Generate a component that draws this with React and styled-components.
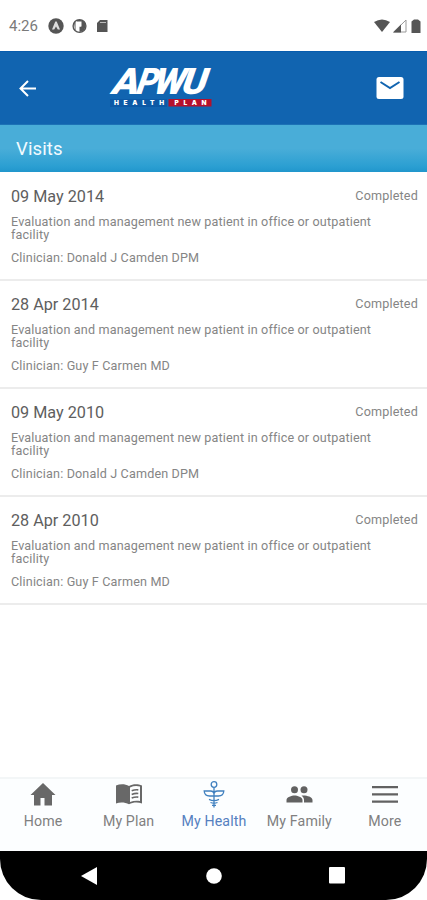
import React from "react";
import styled, { createGlobalStyle } from "styled-components";

const GlobalStyle = createGlobalStyle`
  * { box-sizing: border-box; }
  body { margin: 0; background: #fff; font-family: Roboto, "Liberation Sans", sans-serif; }
`;

const Screen = styled.div`
  width: 427px;
  height: 900px;
  display: flex;
  flex-direction: column;
  background: #fff;
  overflow: hidden;
`;

const StatusBar = styled.header`
  height: 51px;
  flex: none;
  display: flex;
  align-items: center;
  justify-content: space-between;
  padding: 1px 5px 0 9px;
`;

const StatusGroup = styled.div`
  display: flex;
  align-items: center;
  gap: ${(p) => p.$gap}px;
`;

const Clock = styled.span`
  width: 31px;
  font: 400 15px/18px Roboto, sans-serif;
  color: #7a7a7a;
`;

const AppBar = styled.div`
  height: 74px;
  flex: none;
  display: flex;
  align-items: center;
  padding: 0 23px 0 19px;
  background: #1164b0;
  border-top: 1px solid #075cae;
  border-bottom: 1px solid #1c72b6;
`;

const BackButton = styled.button`
  display: flex;
  padding: 0;
  border: 0;
  background: none;
`;

const LogoMark = styled.svg`
  margin: 0 auto 0 72px;
  display: block;
  overflow: visible;
`;

const TitleBar = styled.h1`
  height: 47px;
  flex: none;
  margin: 0;
  padding: 1px 16px 0;
  font-size: 18.5px;
  font-weight: 400;
  line-height: 46px;
  letter-spacing: 0.1px;
  color: #f2fbff;
  background: linear-gradient(#49add8 0, #49add8 50%, #2b9fd2 88%, #2196cc 100%);
`;

const VisitList = styled.main`
  flex: 1;
  padding-top: 1px;
`;

const VisitRow = styled.article`
  height: 108px;
  padding: 14px 9px 0 11px;
  border-bottom: 2px solid #ececec;
`;

const VisitHead = styled.div`
  display: flex;
  justify-content: space-between;
  height: 28px;
`;

const VisitDate = styled.h2`
  margin: 0;
  font-size: 16.2px;
  font-weight: 400;
  line-height: 20px;
  color: #5e5e5e;
`;

const VisitStatus = styled.span`
  font-size: 12.6px;
  line-height: 17px;
  letter-spacing: 0.17px;
  color: #858585;
`;

const VisitText = styled.p`
  margin: 0 0 ${(p) => p.$after || 0}px;
  width: 375px;
  font-size: 12.6px;
  line-height: 13px;
  letter-spacing: 0.15px;
  color: #858585;
`;

const TabBar = styled.nav`
  height: 74px;
  flex: none;
  display: grid;
  grid-template-columns: repeat(5, 1fr);
  background: #fcfeff;
  border-top: 2px solid #f3f6f7;
`;

const Tab = styled.a`
  display: flex;
  flex-direction: column;
  align-items: center;
  gap: 2px;
  padding: 1px 0 0 1px;
  font-size: 14.2px;
  line-height: 18px;
  letter-spacing: 0.12px;
  white-space: nowrap;
  color: ${(p) => (p.$active ? "#5580c0" : "#808080")};
`;

const SystemNav = styled.footer`
  height: 49px;
  flex: none;
  display: flex;
  align-items: center;
  justify-content: space-between;
  padding: 0 82px 0 81px;
  background: #000;
  border-radius: 0 0 41px 41px;
`;

const visits = [
  { date: "09 May 2014", clinician: "Donald J Camden DPM" },
  { date: "28 Apr 2014", clinician: "Guy F Carmen MD" },
  { date: "09 May 2010", clinician: "Donald J Camden DPM" },
  { date: "28 Apr 2010", clinician: "Guy F Carmen MD" },
];

const HomeIcon = () => (
  <svg width="28" height="30" viewBox="0 0 28 30" fill="#686868">
    <path d="M14 3 1.500 15H5v10.500h6.500V18h4v7.500H23V15h3.500z" />
  </svg>
);

const BookIcon = () => (
  <svg width="28" height="30" viewBox="0 0 28 30">
    <path d="M14 6C10 3.600 5 3.700 1 5.500V23.500c4-1.600 9-1.400 13 .8 4-2.200 9-2.400 13-.8V5.500C23 3.700 18 3.600 14 6z" fill="#686868" />
    <path d="M15 7.500c3.500-1.600 6.800-1.900 10-.9v14.500c-3.300-.8-6.700-.5-10 1z" fill="#fcfeff" />
    <path d="M16.700 10.800q3.200-1.300 6.600-.9M16.700 14.400q3.200-1.300 6.600-.9M16.700 18q3.200-1.300 6.600-.9" fill="none" stroke="#686868" strokeWidth="1.600" />
  </svg>
);

const HealthIcon = () => (
  <svg width="28" height="30" viewBox="0 0 28 30" fill="none" stroke="#4080bf" strokeWidth="1.300">
    <circle cx="14" cy="4.500" r="2.800" />
    <path d="M14 7.500v20M14 14.500q0-3.500-3.500-3.500H4.200q.3 5 5.300 5h9q5 0 5.300-5h-6.300q-3.500 0-3.500 3.500M9 19.300q5 2.500 10 0M10.500 22.500q3.500 1.500 7 0M12 25.300h4" />
  </svg>
);

const FamilyIcon = () => (
  <svg width="28" height="30" viewBox="0 0 28 30" fill="#626262">
    <circle cx="9.500" cy="9.800" r="3.500" />
    <circle cx="19" cy="9.800" r="3.500" />
    <path d="M1.500 22.500V20c0-3 5.300-4.500 8-4.500s8 1.500 8 4.500v2.500zM19 22.500V20c0-2-1-3.300-2.500-4.300 3-.8 11 .6 11 4.300v2.500z" />
  </svg>
);

const MoreIcon = () => (
  <svg width="28" height="30" viewBox="0 0 28 30" fill="#626262">
    <path d="M1 6h26v2.300H1zm0 7.200h26v2.300H1zm0 7.300h26v2.300H1z" />
  </svg>
);

const tabs = [
  { label: "Home", icon: <HomeIcon /> },
  { label: "My Plan", icon: <BookIcon /> },
  { label: "My Health", icon: <HealthIcon />, active: true },
  { label: "My Family", icon: <FamilyIcon /> },
  { label: "More", icon: <MoreIcon /> },
];

const Logo = () => (
  <LogoMark width="104" height="42" viewBox="0 0 104 42">
    <g transform="translate(0 27) skewX(-19)">
      <g fontFamily="Roboto, sans-serif" fontWeight="900" fontSize="36.500" fill="#fff">
        <text x="0.500" y="0" textLength="27" lengthAdjust="spacingAndGlyphs">A</text>
        <text x="25" y="0" textLength="21" lengthAdjust="spacingAndGlyphs">P</text>
        <text x="42" y="0" textLength="31" lengthAdjust="spacingAndGlyphs">W</text>
        <text x="70" y="0" textLength="25" lengthAdjust="spacingAndGlyphs">U</text>
      </g>
    </g>
    <rect x="1" y="32" width="57" height="8" fill="#0c59a6" />
    <rect x="59.500" y="32" width="43" height="7.500" fill="#b4102c" />
    <g fontFamily="Inter, sans-serif" fontWeight="900" fontSize="6.500" fill="#fff">
      <text x="5" y="38.200" textLength="50">HEALTH</text>
      <text x="65.500" y="38.200" textLength="32">PLAN</text>
    </g>
  </LogoMark>
);

export default function App() {
  return (
    <>
      <GlobalStyle />
      <Screen>
        <StatusBar>
          <StatusGroup $gap={8}>
            <Clock>4:26</Clock>
            <svg width="16" height="16" viewBox="0 0 16 16">
              <circle cx="8" cy="8" r="7.700" fill="#555" />
              <path d="m4 11.500 3.300-8h1.400l3.300 8H9.800L8 8.500l-1.800 3z" fill="#ddd" />
            </svg>
            <svg width="15" height="16" viewBox="0 0 15 16">
              <circle cx="7.500" cy="8" r="6.400" fill="#fff" stroke="#555" strokeWidth="1.400" />
              <path d="M5 3.500h4.500v5H7.500v5.500a6 6 0 0 0 6-6A6 6 0 0 0 9 2H5zM2 4h1.500v8H3z" fill="#555" />
              <path d="M5 4.500h4v4H7v4.500H5z" fill="#fff" />
            </svg>
            <svg width="15" height="16" viewBox="0 0 15 16">
              <path d="M5 2h7.500v12H2V5z" fill="#555" />
              <path d="M5 4.500h6" stroke="#bbb" />
            </svg>
          </StatusGroup>
          <StatusGroup $gap={3}>
            <svg width="16" height="14" viewBox="0 0 16 14">
              <path d="M0 3q8-5 16 0L8 13z" fill="#555" />
            </svg>
            <svg width="14" height="14" viewBox="0 0 14 14">
              <path d="M.8 13 13 1v12z" fill="#fff" stroke="#999" />
              <path d="M0 13.500 8 5.500v8z" fill="#555" />
            </svg>
            <svg width="12" height="14" viewBox="0 0 12 14">
              <path d="M1.500 2.500 4 .5h4l2.500 2V14h-9z" fill="#555" />
            </svg>
          </StatusGroup>
        </StatusBar>
        <AppBar>
          <BackButton aria-label="Back">
            <svg width="18" height="18" viewBox="0 0 18 18" fill="none" stroke="#fff" strokeWidth="2">
              <path d="M17 9.500H2M9 2 1.500 9.500 9 17" />
            </svg>
          </BackButton>
          <Logo />
          <svg width="28" height="22" viewBox="0 0 28 22">
            <rect x="0.500" y="0" width="27" height="22" rx="2.500" fill="#fff" />
            <path d="m4.500 5 9.500 6 9.500-6" fill="none" stroke="#1164b0" strokeWidth="2" />
          </svg>
        </AppBar>
        <TitleBar>Visits</TitleBar>
        <VisitList>
          {visits.map((v) => (
            <VisitRow key={v.date}>
              <VisitHead>
                <VisitDate>{v.date}</VisitDate>
                <VisitStatus>Completed</VisitStatus>
              </VisitHead>
              <VisitText $after={10}>
                Evaluation and management new patient in office or outpatient facility
              </VisitText>
              <VisitText>Clinician: {v.clinician}</VisitText>
            </VisitRow>
          ))}
        </VisitList>
        <TabBar>
          {tabs.map((t) => (
            <Tab key={t.label} $active={t.active}>
              {t.icon}
              {t.label}
            </Tab>
          ))}
        </TabBar>
        <SystemNav>
          <svg width="17" height="18" viewBox="0 0 17 18"><path d="M0 9 16 0v18z" fill="#fff" /></svg>
          <svg width="16" height="16" viewBox="0 0 16 16"><circle cx="8" cy="8" r="7.800" fill="#fff" /></svg>
          <svg width="16" height="17" viewBox="0 0 16 17"><rect width="16" height="16.500" rx="1" fill="#fff" /></svg>
        </SystemNav>
      </Screen>
    </>
  );
}
